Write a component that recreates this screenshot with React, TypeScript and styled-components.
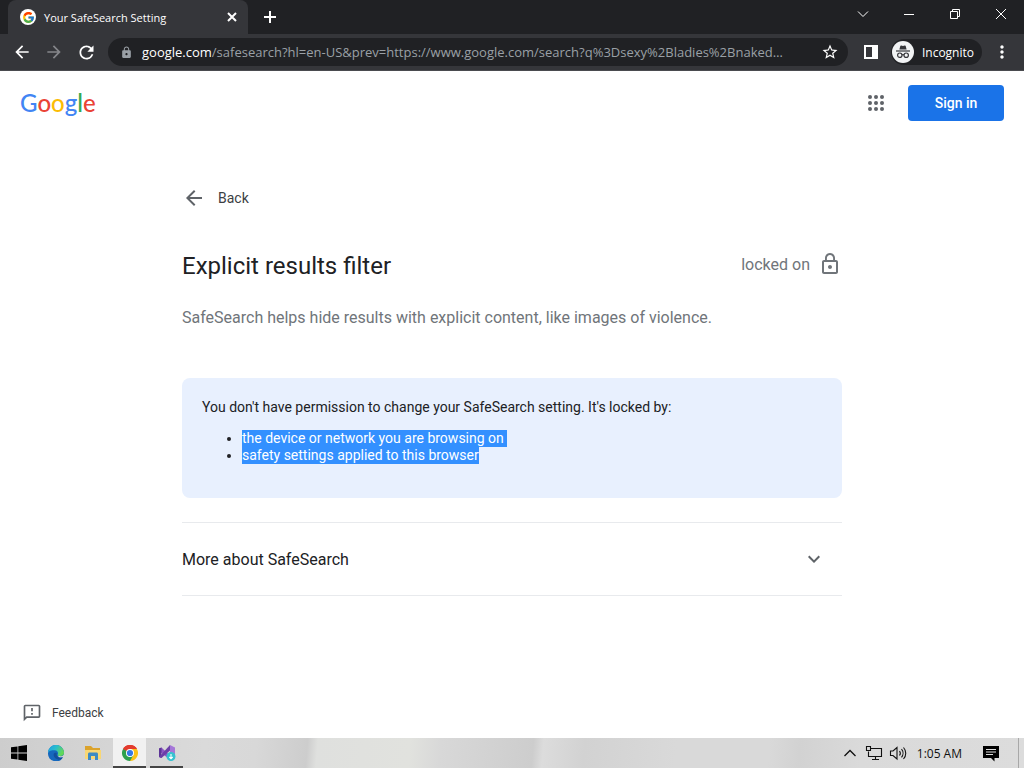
import React from "react";
import styled, { createGlobalStyle, css } from "styled-components";
import {
  MdArrowBack,
  MdArrowForward,
  MdLock,
  MdLockOutline,
  MdMoreVert,
  MdOutlineFeedback,
  MdRefresh,
  MdStarOutline,
  MdKeyboardArrowDown,
} from "react-icons/md";
import { FcGoogle } from "react-icons/fc";

const GlobalStyle = createGlobalStyle`
  *, *::before, *::after { box-sizing: border-box; }
  body { margin: 0; background: #fff; font-family: Roboto, sans-serif; color: #202124; }
  button { margin: 0; padding: 0; border: 0; background: none; color: inherit; font: inherit; cursor: pointer; }
  svg { display: block; flex: none; }
`;

const uiFont = css`
  font-family: "Open Sans", "Noto Sans", sans-serif;
`;

const Screen = styled.div`
  display: flex;
  flex-direction: column;
  min-height: 100vh;
`;

/* Browser chrome */

const TabStrip = styled.div`
  ${uiFont}
  display: flex;
  height: 34px;
  padding-left: 8px;
  background: #202124;
  color: #fff;
`;

const Tab = styled.div`
  display: flex;
  align-items: center;
  gap: 8px;
  width: 240px;
  padding: 0 8px 0 12px;
  border-radius: 8px 8px 0 0;
  background: #35363a;
`;

const Favicon = styled.span`
  display: grid;
  place-items: center;
  width: 16px;
  height: 16px;
  border-radius: 50%;
  background: #fff;
`;

const TabTitle = styled.span`
  flex: 1;
  white-space: nowrap;
  font-size: 11px;
`;

const IconButton = styled.button<{ $w?: number; $h?: number }>`
  display: grid;
  place-items: center;
  flex: none;
  width: ${(p) => p.$w ?? 32}px;
  height: ${(p) => p.$h ?? 28}px;
`;

const NewTab = styled(IconButton)`
  margin: 3px 0 0 6px;
`;

const WindowControls = styled.div`
  display: flex;
  margin-left: auto;
`;

const Toolbar = styled.div`
  ${uiFont}
  display: flex;
  align-items: center;
  height: 37px;
  padding: 0 8px 0 6px;
  background: #35363a;
  border-bottom: 1px solid #4a4b4f;
  color: #fff;
`;

const ForwardButton = styled(IconButton)`
  color: #85868a;
`;

const AddressBar = styled.form`
  display: flex;
  align-items: center;
  flex: 1;
  min-width: 0;
  height: 28px;
  margin: 0 7px 0 6px;
  padding: 0 2px 0 12px;
  border-radius: 14px;
  background: #202124;
  font-size: 13px;
`;

const SiteLock = styled.span`
  margin-right: 9px;
  color: #9aa0a6;
`;

const Domain = styled.label`
  color: #fff;
`;

const UrlInput = styled.input`
  flex: 1;
  min-width: 0;
  padding: 0;
  border: 0;
  outline: 0;
  background: none;
  color: #9aa0a6;
  font: inherit;
`;

const IncognitoBadge = styled.button`
  display: flex;
  align-items: center;
  gap: 8px;
  height: 26px;
  margin: 0 6px 0 4px;
  padding: 0 8px 0 1px;
  border-radius: 13px;
  background: #202124;
  font-size: 12px;
`;

/* Page */

const Page = styled.div`
  display: flex;
  flex: 1;
  flex-direction: column;
`;

const Header = styled.header`
  display: flex;
  align-items: center;
  height: 64px;
  padding: 0 20px;
`;

const Logo = styled.a`
  margin-right: auto;
  font-family: Lato, sans-serif;
  font-size: 24px;
  font-weight: 500;
  line-height: 30px;
  text-decoration: none;
`;

const Letter = styled.span<{ $color: string }>`
  color: ${(p) => p.$color};
`;

const SignIn = styled.a`
  width: 96px;
  height: 36px;
  margin-left: 12px;
  border-radius: 4px;
  background: #1a73e8;
  color: #fff;
  font-size: 14px;
  font-weight: 500;
  line-height: 36px;
  text-align: center;
  text-decoration: none;
`;

const Column = styled.main`
  width: 100%;
  max-width: 660px;
  margin: 0 auto;
  padding-top: 51px;
`;

const BackLink = styled.a`
  display: inline-flex;
  align-items: center;
  gap: 12px;
  height: 24px;
  color: #3c4043;
  font-size: 14px;
  text-decoration: none;

  svg { color: #5f6368; }
`;

const TitleRow = styled.div`
  display: flex;
  align-items: center;
  justify-content: space-between;
  margin-top: 36px;
`;

const Title = styled.h1`
  margin: 0;
  font-size: 24px;
  font-weight: 400;
  line-height: 32px;
`;

const Status = styled.div`
  display: flex;
  align-items: center;
  gap: 8px;
  padding-bottom: 4px;
  color: #70757a;
  font-size: 16px;
`;

const Summary = styled.p`
  margin: 24px 0 48px;
  color: #70757a;
  font-size: 16px;
  line-height: 24px;
`;

const Notice = styled.section`
  padding: 20px;
  border-radius: 8px;
  background: #e8f0fe;
  font-size: 14px;
  line-height: 17px;
`;

const NoticeText = styled.p`
  margin: 0;
  line-height: 18px;
`;

const Reasons = styled.ul`
  margin: 14px 0;
  padding-left: 40px;
`;

const Selected = styled.mark`
  display: inline-block;
  background: #3390ff;
  color: #fff;
  vertical-align: top;

  li:not(:last-child) > & { padding-right: 3px; }
`;

const More = styled.button`
  display: flex;
  align-items: center;
  justify-content: space-between;
  width: 100%;
  height: 74px;
  margin-top: 24px;
  padding-right: 16px;
  border-top: 1px solid #e8eaed;
  border-bottom: 1px solid #e8eaed;
  font-size: 16px;

  svg { color: #5f6368; }
`;

const Footer = styled.footer`
  margin-top: auto;
  padding: 0 22px 10px;
`;

const FeedbackLink = styled.a`
  display: flex;
  align-items: center;
  gap: 10px;
  width: fit-content;
  height: 30px;
  color: #3c4043;
  font-size: 12px;
  text-decoration: none;

  svg { color: #5f6368; }
`;

/* Taskbar */

const Taskbar = styled.nav`
  ${uiFont}
  display: flex;
  align-items: stretch;
  height: 30px;
  background: linear-gradient(
    95deg,
    #cdcdcd 0%, #d6d6d6 12%, #dadada 20%, #d8d8d8 25%, #cdcdcd 30%,
    #dfe0de 31%, #e1e2de 40%, #d8d8d8 43%, #cdcdcd 52%, #dcdcdc 53%,
    #d2d2d2 57%, #d9d9d9 66%, #d9d9d9 75%, #d2d2d2 78%, #dadada 84%, #dcdcdc 100%
  );
  color: #111;
`;

const TaskButton = styled.button<{ $active?: boolean; $open?: boolean }>`
  display: grid;
  place-items: center;
  width: 33px;
  margin: 0 2px;
  background: ${(p) => (p.$active ? "#f1f1f1" : "none")};
  box-shadow: ${(p) => (p.$active || p.$open ? "inset 0 -2px 0 #444" : "none")};
`;

const Tray = styled.div`
  display: flex;
  align-items: center;
  margin-left: auto;
`;

const Clock = styled.time`
  margin: 0 12px 0 7px;
  font-size: 12px;
  white-space: nowrap;
`;

const ShowDesktop = styled.button`
  align-self: stretch;
  width: 6px;
  margin-left: 10px;
  border-left: 1px solid #a8a8a8;
`;

const Line = ({ d, size = 12, width = 1, box = size }: { d: string; size?: number; width?: number; box?: number }) => (
  <svg width={size} height={size} viewBox={`0 0 ${box} ${box}`} fill="none" stroke="currentColor" strokeWidth={width}>
    <path d={d} />
  </svg>
);

const IncognitoIcon = () => (
  <svg width="22" height="22" viewBox="0 0 22 22">
    <circle cx="11" cy="11" r="11" fill="#f1f3f4" />
    <path d="M7.4 8.6 8.3 5c.1-.5.6-.7 1-.5l1.7.5 1.7-.5c.4-.2.9 0 1 .5l.9 3.6z" fill="#35363a" />
    <path d="M4 10h14" stroke="#35363a" strokeWidth="1.2" />
    <g fill="none" stroke="#35363a" strokeWidth="1.2">
      <circle cx="7.8" cy="14.2" r="2.2" />
      <circle cx="14.2" cy="14.2" r="2.2" />
      <path d="M10 14c.6-.5 1.4-.5 2 0" />
    </g>
  </svg>
);

const AppsIcon = () => (
  <svg width="24" height="24" viewBox="0 0 24 24" fill="#5f6368">
    {[6, 12, 18].map((y) => [6, 12, 18].map((x) => <circle key={`${x}-${y}`} cx={x} cy={y} r="2" />))}
  </svg>
);

const WindowsIcon = () => (
  <svg width="16" height="16" viewBox="0 0 16 16" fill="#000">
    <path d="M0 2.3 6.5 1.4v6.1H0zM7.3 1.3 16 0v7.5H7.3zM0 8.4h6.5v6.2L0 13.7zM7.3 8.4H16V16l-8.7-1.3z" />
  </svg>
);

const EdgeIcon = () => (
  <svg width="16" height="16" viewBox="0 0 16 16">
    <defs>
      <linearGradient id="edgeTop" x1="0" y1="0" x2="1" y2="0.4">
        <stop offset="0" stopColor="#1f9fe0" />
        <stop offset="0.5" stopColor="#29bcd0" />
        <stop offset="1" stopColor="#62d957" />
      </linearGradient>
    </defs>
    <path d="M0 8a8 8 0 0 1 16 0c0 1-.3 1.600-.8 2.200-1 1.300-4.600 1.300-5.600.1.800 2.200 3.300 2.800 5.400 1.900A8 8 0 0 1 0 8z" fill="#1668bd" />
    <path d="M0 8a8 8 0 0 1 16-.2c0 2.200-1.700 3.300-3.600 3.300-2.200 0-3-.8-2.700-1.400.9-1.500.1-4.400-3.100-4.400C3.500 5.300.8 5.800 0 8z" fill="url(#edgeTop)" />
    <path d="M5.600 9.500c0 3 2.600 5.200 6.300 5.300 1.300-.7 2.300-1.600 3.100-2.600-3.600 1.400-7-.3-6.300-4.300-1.500-.5-3.100.2-3.100 1.600z" fill="#124f9c" />
  </svg>
);

const FolderIcon = () => (
  <svg width="18" height="16" viewBox="0 0 18 16">
    <path d="M1 1h6l2 2h7v3H1z" fill="#dba32c" />
    <path d="M1 5h16v9H1z" fill="#f8d775" />
    <path d="M4 15V9c0-1 .6-1.600 1.600-1.600h6.800c1 0 1.600.6 1.600 1.600v6h-3v-4H7v4z" fill="#3b8ac4" />
  </svg>
);

const ChromeIcon = () => (
  <svg width="16" height="16" viewBox="0 0 16 16">
    <path d="M8 8 1.070 4A8 8 0 0 1 14.930 4z" fill="#e33b2e" />
    <path d="M8 8 14.930 4A8 8 0 0 1 8 16z" fill="#fbc116" />
    <path d="M8 8 8 16A8 8 0 0 1 1.070 4z" fill="#2da04e" />
    <path d="M8 4h6.930L11.500 10z" fill="#fbc116" />
    <path d="M8 4 1.070 4 4.540 10 8 8z" fill="#2da04e" />
    <path d="M1.070 4A8 8 0 0 1 14.930 4H8L4.540 6z" fill="#e33b2e" />
    <path d="M11.460 10 8 16 4.600 10z" fill="#2da04e" />
    <circle cx="8" cy="8" r="4" fill="#fff" />
    <circle cx="8" cy="8" r="3.100" fill="#3478e5" />
  </svg>
);

const VisualStudioIcon = () => (
  <svg width="18" height="18" viewBox="0 0 18 18">
    <path d="M1 4.500 3.500 3.500l9 8.500-1.500 3L1 7z" fill="#8b57c4" />
    <path d="M1 4.500 3.500 3.500v10.500L1 13z" fill="#5c3596" />
    <path d="M12 1 17 3.500v11L12 17z" fill="#a577d8" />
    <path d="M12 1v5.500L3.500 14 1 13z" fill="#6c3fa8" />
    <circle cx="13" cy="12.500" r="4.500" fill="#35c4d0" />
    <path d="M13 10v4.500M11.300 13l1.700 1.700 1.700-1.700" fill="none" stroke="#fff" strokeWidth="1.100" />
  </svg>
);

const NetworkIcon = () => (
  <svg width="18" height="16" viewBox="0 0 18 16" fill="none" stroke="#111" strokeWidth="1.100">
    <path d="M5.500 3.500h11v8h-13v-5M10.500 11.500v3M7 14.500h7" />
    <path d="M1.500 1.500h4v4h-4z" />
  </svg>
);

const SpeakerIcon = () => (
  <svg width="18" height="16" viewBox="0 0 18 16" fill="none" stroke="#111" strokeWidth="1.100">
    <path d="M1.500 6v4.500H4l4 3.500V2.500L4 6z" />
    <path d="M10.500 6c1 1.300 1 3.200 0 4.500M12.500 4.200c2 2.300 2 5.800 0 8.100M14.500 2.500c3 3.300 3 8.200 0 11.500" />
  </svg>
);

const NotificationIcon = () => (
  <svg width="16" height="17" viewBox="0 0 16 17">
    <path d="M0 1h16v12h-4.500v3.500L8 13H0z" fill="#000" />
    <path d="M3 4.500h10M3 7h10M3 9.500h7" stroke="#ddd" />
  </svg>
);

const logoLetters: [string, string][] = [
  ["G", "#4285f4"],
  ["o", "#ea4335"],
  ["o", "#fbbc05"],
  ["g", "#4285f4"],
  ["l", "#34a853"],
  ["e", "#ea4335"],
];

const reasons = ["the device or network you are browsing on", "safety settings applied to this browser"];

export default function App() {
  return (
    <Screen>
      <GlobalStyle />
      <TabStrip>
        <Tab>
          <Favicon><FcGoogle size={13} /></Favicon>
          <TabTitle>Your SafeSearch Setting</TabTitle>
          <IconButton $w={16} $h={16} aria-label="Close tab"><Line d="M2 2l8 8M10 2l-8 8" width={2} /></IconButton>
        </Tab>
        <NewTab $w={32} aria-label="New tab"><Line d="M6 0v12M0 6h12" width={2} /></NewTab>
        <WindowControls>
          <IconButton $w={46} aria-label="Search tabs"><Line d="M1 3.500l5 5 5-5" /></IconButton>
          <IconButton $w={46} aria-label="Minimize"><Line d="M1 6.500h10" /></IconButton>
          <IconButton $w={46} aria-label="Restore"><Line d="M1.500 3.500h7v7h-7zM3.500 3.500v-2h7v7h-2" /></IconButton>
          <IconButton $w={46} aria-label="Close"><Line d="M1 1l10 10M11 1L1 11" /></IconButton>
        </WindowControls>
      </TabStrip>
      <Toolbar>
        <IconButton aria-label="Back"><MdArrowBack size={20} /></IconButton>
        <ForwardButton aria-label="Forward"><MdArrowForward size={20} /></ForwardButton>
        <IconButton aria-label="Reload"><MdRefresh size={21} /></IconButton>
        <AddressBar>
          <SiteLock><MdLock size={13} /></SiteLock>
          <Domain htmlFor="url">google.com</Domain>
          <UrlInput
            id="url"
            defaultValue="/safesearch?hl=en-US&prev=https://www.google.com/search?q%3Dsexy%2Bladies%2Bnaked…"
          />
          <IconButton type="button" aria-label="Bookmark"><MdStarOutline size={18} /></IconButton>
        </AddressBar>
        <IconButton aria-label="Side panel">
          <svg width="14" height="14" viewBox="0 0 14 14"><path fillRule="evenodd" d="M0 0h14v14H0zM2 2v10h6V2z" fill="#fff" /></svg>
        </IconButton>
        <IncognitoBadge><IncognitoIcon />Incognito</IncognitoBadge>
        <IconButton $w={28} aria-label="Menu"><MdMoreVert size={20} /></IconButton>
      </Toolbar>

      <Page>
        <Header>
          <Logo href="#" aria-label="Google">
            {logoLetters.map(([letter, color], i) => <Letter key={i} $color={color}>{letter}</Letter>)}
          </Logo>
          <IconButton $w={40} $h={40} aria-label="Google apps"><AppsIcon /></IconButton>
          <SignIn href="#">Sign in</SignIn>
        </Header>
        <Column>
          <BackLink href="#"><MdArrowBack size={24} />Back</BackLink>
          <TitleRow>
            <Title>Explicit results filter</Title>
            <Status>locked on<MdLockOutline size={24} /></Status>
          </TitleRow>
          <Summary>SafeSearch helps hide results with explicit content, like images of violence.</Summary>
          <Notice>
            <NoticeText>You don't have permission to change your SafeSearch setting. It's locked by:</NoticeText>
            <Reasons>
              {reasons.map((reason) => <li key={reason}><Selected>{reason}</Selected></li>)}
            </Reasons>
          </Notice>
          <More aria-expanded="false">More about SafeSearch<MdKeyboardArrowDown size={24} /></More>
        </Column>
        <Footer>
          <FeedbackLink href="#"><MdOutlineFeedback size={20} />Feedback</FeedbackLink>
        </Footer>
      </Page>

      <Taskbar>
        <TaskButton aria-label="Start"><WindowsIcon /></TaskButton>
        <TaskButton aria-label="Edge"><EdgeIcon /></TaskButton>
        <TaskButton aria-label="File Explorer"><FolderIcon /></TaskButton>
        <TaskButton $active aria-label="Chrome"><ChromeIcon /></TaskButton>
        <TaskButton $open aria-label="Visual Studio Installer"><VisualStudioIcon /></TaskButton>
        <Tray>
          <IconButton $w={24} aria-label="Show hidden icons"><Line d="M0.500 9l5.500-5.500L11.500 9" width={1.300} /></IconButton>
          <IconButton $w={24} aria-label="Network"><NetworkIcon /></IconButton>
          <IconButton $w={24} aria-label="Volume"><SpeakerIcon /></IconButton>
          <Clock>1:05 AM</Clock>
          <IconButton $w={34} aria-label="Notifications"><NotificationIcon /></IconButton>
          <ShowDesktop aria-label="Show desktop" />
        </Tray>
      </Taskbar>
    </Screen>
  );
}
